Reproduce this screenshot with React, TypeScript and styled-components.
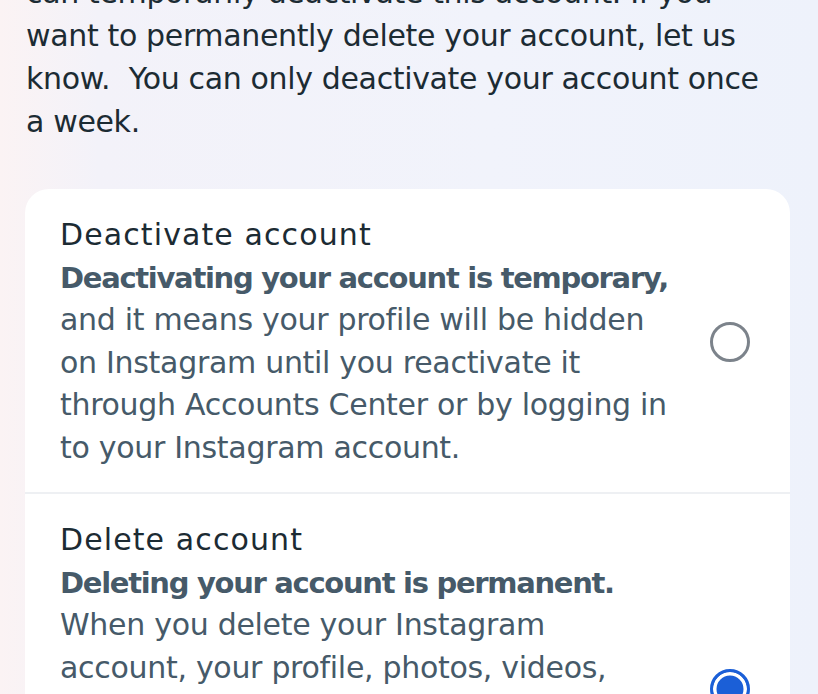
import React from 'react'
import styled, { createGlobalStyle } from 'styled-components'

const Global = createGlobalStyle`
  html, body {
    margin: 0;
    padding: 0;
  }
  body {
    width: 818px;
    height: 694px;
    overflow: hidden;
    background: linear-gradient(90deg, #fbf3f4 0%, #f3f2f9 12%, #f1f3fb 60%, #eef2fb 100%);
    font-family: 'DejaVu Sans', Roboto, sans-serif;
  }
`

type Option = {
  title: string
  lead: string
  body: string[]
  selected: boolean
}

const intro = [
  'If you need a break from Instagram, you',
  'can temporarily deactivate this account. If you',
  'want to permanently delete your account, let us',
  'know.\u00a0 You can only deactivate your account once',
  'a week.',
]

const options: Option[] = [
  {
    title: 'Deactivate account',
    lead: 'Deactivating your account is temporary,',
    body: [
      'and it means your profile will be hidden',
      'on Instagram until you reactivate it',
      'through Accounts Center or by logging in',
      'to your Instagram account.',
    ],
    selected: false,
  },
  {
    title: 'Delete account',
    lead: 'Deleting your account is permanent.',
    body: [
      'When you delete your Instagram',
      'account, your profile, photos, videos,',
      'comments, likes and followers will be',
      'permanently removed. If you\u2019d just like',
      'to take a break, you can temporarily',
      'deactivate your account.',
    ],
    selected: true,
  },
]

const Lines = ({ lines }: { lines: string[] }) => (
  <>
    {lines.map((l, i) => (
      <React.Fragment key={i}>
        {i > 0 && <br />}
        {l}
      </React.Fragment>
    ))}
  </>
)

export default function App() {
  return (
    <>
      <Global />
      <Page>
        <Intro>
          <Lines lines={intro} />
        </Intro>
        <Card>
          {options.map((o) => (
            <Row key={o.title}>
              <Texts>
                <Title>{o.title}</Title>
                <Desc>
                  <Lead>{o.lead}</Lead>
                  <Lines lines={o.body} />
                </Desc>
              </Texts>
              <Radio $on={o.selected} />
            </Row>
          ))}
        </Card>
      </Page>
    </>
  )
}

const Page = styled.main`
  display: flex;
  flex-direction: column;
  gap: 46px;
  padding: 0 28px 0 25px;
  margin-top: -72px;
`

const Intro = styled.p`
  margin: 0;
  padding-left: 1px;
  white-space: nowrap;
  font-size: 30px;
  letter-spacing: -0.35px;
  line-height: 43px;
  color: #1c2b33;
`

const Card = styled.section`
  background: #ffffff;
  border-radius: 24px;
  overflow: hidden;
`

const Row = styled.div`
  display: flex;
  align-items: center;
  gap: 24px;
  padding: 25px 40px 23px 35px;
  & + & {
    border-top: 2px solid #eef0f3;
  }
`

const Texts = styled.div`
  flex: 1;
  display: flex;
  flex-direction: column;
  white-space: nowrap;
`

const Title = styled.h2`
  margin: 0;
  font-size: 30px;
  font-weight: 400;
  letter-spacing: 1.1px;
  line-height: 42.5px;
  color: #1c2b33;
`

const Desc = styled.p`
  margin: 0;
  font-size: 30px;
  letter-spacing: -0.3px;
  line-height: 42.5px;
  color: #465a69;
`

const Lead = styled.strong`
  display: block;
  font-size: 29px;
  font-weight: 700;
  letter-spacing: -1.3px;
`

const Radio = styled.span<{ $on: boolean }>`
  flex: none;
  width: 40px;
  height: 40px;
  box-sizing: border-box;
  border-radius: 50%;
  border: 3.5px solid ${(p) => (p.$on ? '#1b5fd7' : '#7c838b')};
  background: ${(p) => (p.$on ? '#1b5fd7' : 'transparent')};
  box-shadow: ${(p) => (p.$on ? 'inset 0 0 0 3.5px #ffffff' : 'none')};
`
